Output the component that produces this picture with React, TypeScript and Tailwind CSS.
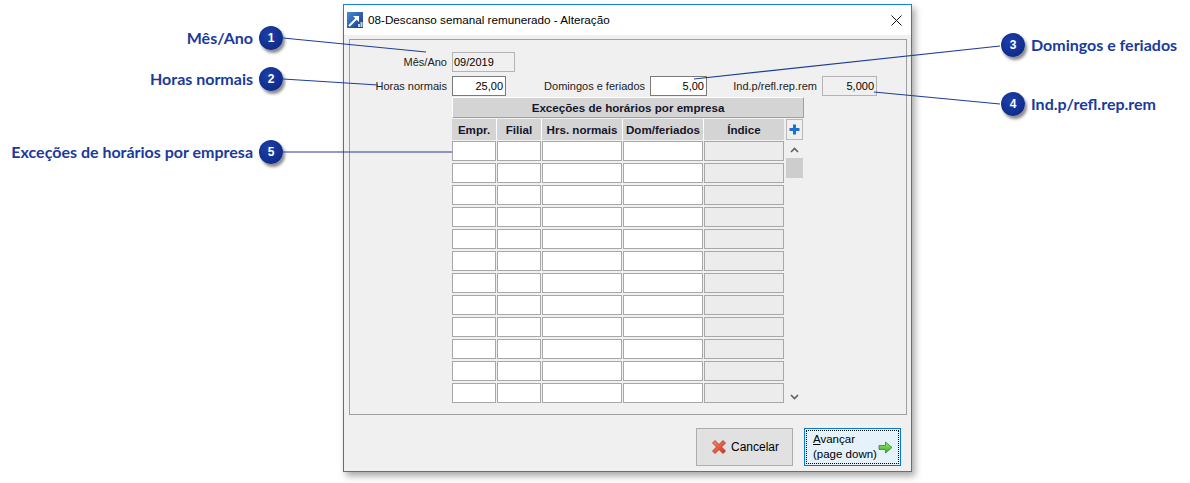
import React from "react";

const F = { fontFamily: '"Liberation Sans", Arial, sans-serif' };
const CF = { fontFamily: 'Lato, "Liberation Sans", sans-serif' };

function Badge({ n }: { n: number }) {
  return (
    <div
      className="w-[24px] h-[24px] rounded-full bg-[radial-gradient(circle_at_40%_35%,#1d3fa8,#0a2580)] text-white text-[12px] font-bold flex items-center justify-center shadow-[2px_3px_3px_rgba(0,0,0,0.45)] shrink-0"
      style={F}
    >
      {n}
    </div>
  );
}

function LeftCallout({ label, n, className }: { label: string; n: number; className?: string }) {
  return (
    <div className={"flex items-center gap-[6px] h-[24px] " + (className || "")}>
      <span className="text-[16px] font-bold text-[#1a3a9c] whitespace-nowrap" style={CF}>
        {label}
      </span>
      <Badge n={n} />
    </div>
  );
}

function RightCallout({ label, n, className }: { label: string; n: number; className?: string }) {
  return (
    <div className={"flex items-center gap-[6px] h-[24px] " + (className || "")}>
      <Badge n={n} />
      <span className="text-[16px] font-bold text-[#1a3a9c] whitespace-nowrap" style={CF}>
        {label}
      </span>
    </div>
  );
}

function TitleIcon() {
  return (
    <svg width="16" height="16" viewBox="0 0 16 16">
      <defs>
        <linearGradient id="ti" x1="0" y1="0" x2="1" y2="1">
          <stop offset="0" stopColor="#4d8ad6" />
          <stop offset="1" stopColor="#123a86" />
        </linearGradient>
      </defs>
      <rect x="0" y="0" width="16" height="16" fill="url(#ti)" />
      <path d="M2 14 L10 6" stroke="#fff" strokeWidth="2" />
      <path d="M6 4 H12 V10 Z" fill="#fff" />
      <rect x="11" y="12" width="2" height="3" fill="#c9d4e6" />
      <rect x="13.5" y="10" width="2" height="5" fill="#c9d4e6" />
    </svg>
  );
}

function CancelIcon() {
  return (
    <svg width="18" height="18" viewBox="0 0 18 18">
      <defs>
        <linearGradient id="cx" x1="0" y1="0" x2="1" y2="1">
          <stop offset="0" stopColor="#ff8a6a" />
          <stop offset="1" stopColor="#d1301c" />
        </linearGradient>
      </defs>
      <path
        d="M2.5 5 L5 2.5 L9 6.5 L13 2.5 L15.5 5 L11.5 9 L15.5 13 L13 15.5 L9 11.5 L5 15.5 L2.5 13 L6.5 9 Z"
        fill="url(#cx)"
        stroke="#a9271a"
        strokeWidth="0.7"
      />
    </svg>
  );
}

function NextIcon() {
  return (
    <svg width="15" height="13" viewBox="0 0 15 13">
      <defs>
        <linearGradient id="gx" x1="0" y1="0" x2="0" y2="1">
          <stop offset="0" stopColor="#9be872" />
          <stop offset="1" stopColor="#3fae22" />
        </linearGradient>
      </defs>
      <path d="M1 4.5 H7.5 V1 L14 6.5 L7.5 12 V8.5 H1 Z" fill="url(#gx)" stroke="#2f8a1e" strokeWidth="0.8" />
    </svg>
  );
}

function Chevron({ up }: { up?: boolean }) {
  return (
    <svg width="9" height="6" viewBox="0 0 9 6">
      <polyline
        points={up ? "1,5 4.5,1.5 8,5" : "1,1 4.5,4.5 8,1"}
        fill="none"
        stroke="#606060"
        strokeWidth="1.6"
      />
    </svg>
  );
}

const cols = [
  { name: "Empr.", w: "w-[44px]" },
  { name: "Filial", w: "w-[44px]" },
  { name: "Hrs. normais", w: "w-[80px]" },
  { name: "Dom/feriados", w: "w-[80px]" },
  { name: "Índice", w: "w-[80px]" },
];

export default function App() {
  const rows = Array.from({ length: 12 }, (_, i) => i);
  return (
    <div className="relative w-[1190px] h-[483px] bg-white flex items-start overflow-hidden">
      {/* left callouts */}
      <div className="w-[343px] shrink-0 flex flex-col items-end pr-[60px] pt-[26px]">
        <LeftCallout label="Mês/Ano" n={1} />
        <LeftCallout label="Horas normais" n={2} className="mt-[17px]" />
        <LeftCallout label="Exceções de horários por empresa" n={5} className="mt-[49px]" />
      </div>

      {/* dialog */}
      <div
        className="mt-[4px] w-[569px] h-[468px] shrink-0 border border-[#1883d7] bg-[#f0f0f0] shadow-[3px_4px_7px_rgba(0,0,0,0.35)] flex flex-col"
        style={F}
      >
        <div className="h-[30px] bg-white flex items-center pl-[3px] shrink-0">
          <TitleIcon />
          <span className="ml-[5px] text-[11.7px] text-black">08-Descanso semanal remunerado - Alteração</span>
          <svg className="ml-auto mr-[9px]" width="11" height="11" viewBox="0 0 11 11">
            <path d="M0.5 0.5 L10.5 10.5 M10.5 0.5 L0.5 10.5" stroke="#111" strokeWidth="1" />
          </svg>
        </div>

        <div className="mt-[4px] ml-[5px] w-[558px] h-[376px] border border-[#a0a0a0] flex flex-col text-[11px] text-black shrink-0">
          {/* row 1 */}
          <div className="flex items-center mt-[12px] h-[20px]">
            <span className="w-[97px] text-right text-[#222]">Mês/Ano</span>
            <div className="ml-[5px] w-[63px] h-[20px] border border-[#b4b4b4] bg-[#f0f0f0] flex items-center pl-[1px]">
              09/2019
            </div>
          </div>
          {/* row 2 */}
          <div className="flex items-center mt-[4px] h-[20px]">
            <span className="w-[97px] text-right text-[#222]">Horas normais</span>
            <div className="ml-[5px] w-[54px] h-[20px] border border-[#7a7a7a] bg-white flex items-center justify-end pr-[2px]">
              25,00
            </div>
            <span className="w-[139px] text-right text-[#222]">Domingos e feriados</span>
            <div className="ml-[5px] w-[57px] h-[20px] border border-[#7a7a7a] bg-white flex items-center justify-end pr-[2px]">
              5,00
            </div>
            <span className="w-[110px] text-right text-[#222]">Ind.p/refl.rep.rem</span>
            <div className="ml-[5px] w-[55px] h-[20px] border border-[#b4b4b4] bg-[#f0f0f0] flex items-center justify-end pr-[2px]">
              5,000
            </div>
          </div>

          {/* grid */}
          <div className="ml-[102px] mt-[1px] w-[352px] flex flex-col gap-px">
            <div className="h-[21px] bg-[#d4d4d4] border-t border-l border-t-white border-l-white border-b border-r border-b-[#a0a0a0] border-r-[#a0a0a0] flex items-center justify-center font-bold text-[11.6px] text-[#14142a]">
              Exceções de horários por empresa
            </div>
            <div className="flex gap-[2px]">
              <div className="w-[332px] flex flex-col gap-px">
                <div className="flex h-[21px] gap-px bg-white">
                  {cols.map((c) => (
                    <div
                      key={c.name}
                      className={c.w + " h-[21px] bg-[#d4d4d4] flex items-center justify-center font-bold text-[11.6px] text-[#14142a] whitespace-nowrap"}
                    >
                      {c.name}
                    </div>
                  ))}
                </div>
                <div className="flex flex-col gap-[2px]">
                  {rows.map((r) => (
                    <div key={r} className="flex gap-px h-[20px]">
                      {cols.map((c, i) => (
                        <div
                          key={c.name}
                          className={
                            c.w +
                            " h-[20px] border border-[#a8a8a8] " +
                            (i === 4 ? "bg-[#ececec]" : "bg-white")
                          }
                        />
                      ))}
                    </div>
                  ))}
                </div>
              </div>
              <div className="w-[17px] flex flex-col">
                <div className="h-[21px] border border-[#b9b9b9] bg-[#f0f0f0] flex items-center justify-center">
                  <svg width="11" height="11" viewBox="0 0 11 11">
                    <path d="M5.5 0.5 V10.5 M0.5 5.5 H10.5" stroke="#1f6fd1" strokeWidth="3" />
                  </svg>
                </div>
                <div className="mt-px h-[264px] flex flex-col items-center">
                  <div className="h-[17px] w-full flex items-center justify-center">
                    <Chevron up />
                  </div>
                  <div className="h-[20px] w-full bg-[#cdcdcd]" />
                  <div className="flex-1" />
                  <div className="h-[17px] w-full flex items-center justify-center">
                    <Chevron />
                  </div>
                </div>
              </div>
            </div>
          </div>
        </div>

        {/* buttons */}
        <div className="flex justify-end gap-[11px] mt-[13px] pr-[10px]">
          <div className="w-[97px] h-[38px] bg-[#e1e1e1] border border-[#adadad] flex items-center justify-center gap-[3px] text-[12px] text-black">
            <CancelIcon />
            <span>Cancelar</span>
          </div>
          <div className="w-[97px] h-[38px] bg-[#e5f1fb] border border-[#0078d7] p-[1px]">
            <div className="w-full h-full border border-dotted border-black flex items-center pl-[6px] pr-[5px] text-[11.5px] text-black whitespace-nowrap">
              <div className="flex flex-col leading-[15px]">
                <span>
                  <span className="underline">A</span>vançar
                </span>
                <span>(page down)</span>
              </div>
              <div className="ml-auto">
                <NextIcon />
              </div>
            </div>
          </div>
        </div>
      </div>

      {/* right callouts */}
      <div className="flex-1 pl-[89px] pt-[33px] flex flex-col">
        <RightCallout label="Domingos e feriados" n={3} />
        <RightCallout label="Ind.p/refl.rep.rem" n={4} className="mt-[35px]" />
      </div>

      {/* connector lines */}
      <svg className="absolute inset-0 pointer-events-none" width="1190" height="483">
        <g stroke="#1f3d9a" strokeWidth="1.2" fill="none">
          <line x1="283" y1="38" x2="426" y2="52" />
          <line x1="283" y1="79" x2="378" y2="85" />
          <line x1="283" y1="152" x2="452" y2="152" />
          <line x1="1000" y1="46" x2="694" y2="79" />
          <line x1="1000" y1="104" x2="874" y2="92" />
        </g>
      </svg>
    </div>
  );
}
